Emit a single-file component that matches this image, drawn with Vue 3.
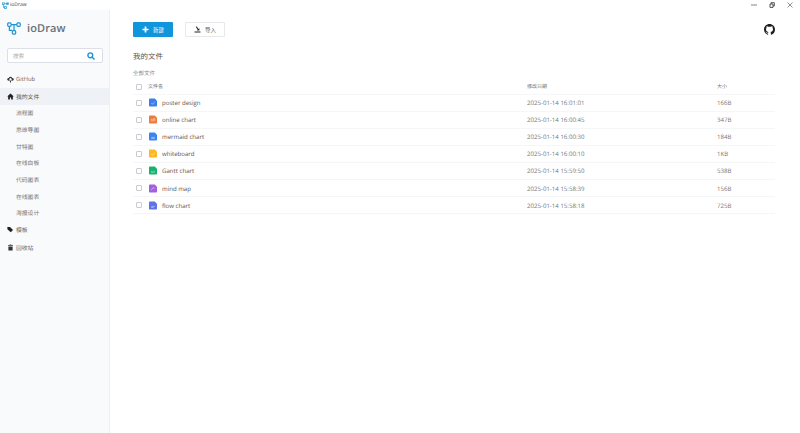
<script setup>
const nav1 = ['流程图', '思维导图', '甘特图', '在线白板', '代码图表', '在线图表', '海报设计']
const files = [
  { name: 'poster design', date: '2025-01-14 16:01:01', size: '166B', color: '#3b7ded', mark: 'M-2 0.5l1.5 1.5 2.5-3' },
  { name: 'online chart', date: '2025-01-14 16:00:45', size: '347B', color: '#ee7a3c', mark: 'M-2 2v-2h1.3v2M0.7 2v-3h1.3v3' },
  { name: 'mermaid chart', date: '2025-01-14 16:00:30', size: '184B', color: '#3a86f0', mark: 'M-2 1h4M-2 2.2h4' },
  { name: 'whiteboard', date: '2025-01-14 16:00:10', size: '1KB', color: '#fbb81f', mark: 'M-2 1l1.5 1 2.5-3' },
  { name: 'Gantt chart', date: '2025-01-14 15:59:50', size: '538B', color: '#17b26e', mark: 'M-2 1h1.6M0.4 1h1.6M-2 2.2h1.6M0.4 2.2h1.6' },
  { name: 'mind map', date: '2025-01-14 15:58:39', size: '156B', color: '#a35fe0', mark: 'M-2 2l2-3 2 1' },
  { name: 'flow chart', date: '2025-01-14 15:58:18', size: '725B', color: '#5f72e6', mark: 'M-2 1h4M-2 2.2h2.6' }
]
</script>

<template>
  <div class="window">
    <header class="titlebar">
      <div class="tb-left">
        <svg class="tb-logo" viewBox="0 0 24 24" width="7" height="7" fill="none" stroke="#1a9ad6" stroke-width="2.500"><rect x="2" y="3" width="6" height="6"/><rect x="16" y="3" width="6" height="6"/><rect x="9" y="16" width="6" height="6"/><path d="M8 6h8M5 9v10h4"/></svg>
        <span>ioDraw</span>
      </div>
      <div class="tb-controls">
        <svg width="6" height="6" viewBox="0 0 6 6"><path d="M0 3h6" stroke="#666" stroke-width="0.8"/></svg>
        <svg width="6" height="6" viewBox="0 0 6 6"><path d="M1 2h3v3.400H1zM2 2V.7h3.300V4H4" stroke="#444" stroke-width="0.9" fill="none"/></svg>
        <svg width="6" height="6" viewBox="0 0 6 6"><path d="M.5.5l5 5M5.500.5l-5 5" stroke="#666" stroke-width="0.7"/></svg>
      </div>
    </header>
    <div class="body">
      <aside class="sidebar">
        <div class="brand">
          <svg width="14" height="13" viewBox="0 0 14 13" fill="none" stroke="#1b95d2" stroke-width="1.200">
            <rect x="0.700" y="0.900" width="3.400" height="3.400" rx="1"/>
            <rect x="9.900" y="0.900" width="3.400" height="3.400" rx="1"/>
            <rect x="5.300" y="8.700" width="3.400" height="3.400" rx="1"/>
            <path d="M4.100 2.600h5.800M2.400 4.300v4h2.900M7 2.600v6.100"/>
          </svg>
          <span>ioDraw</span>
        </div>
        <div class="search">
          <span class="search-ph">搜索</span>
          <svg width="8" height="8" viewBox="0 0 8 8" fill="none" stroke="#1b95d2" stroke-width="1.400"><circle cx="3.300" cy="3.300" r="2.400"/><path d="M5 5l2.500 2.500"/></svg>
        </div>
        <nav class="nav">
          <div class="nav-item">
            <svg class="ico" viewBox="0 0 8 8"><path d="M4 .8a2 2 0 0 1 1.900 1.500A1.700 1.700 0 0 1 7.800 4a1.600 1.600 0 0 1-1.600 1.300H5V4H6L4 2 2 4h1v1.300H1.800A1.600 1.600 0 0 1 .2 4a1.700 1.700 0 0 1 1.900-1.700A2 2 0 0 1 4 .8zM3.400 5h1.200v2.400H3.400z" fill="#333"/></svg>
            <span>GitHub</span>
          </div>
          <div class="nav-item active">
            <svg class="ico" viewBox="0 0 8 8"><path d="M4 .6L.2 4h1.100v3.400h2V5.200h1.400v2.200h2V4h1.100z" fill="#222"/></svg>
            <span>我的文件</span>
          </div>
          <div v-for="n in nav1" :key="n" class="nav-sub">{{ n }}</div>
          <div class="nav-item">
            <svg class="ico" viewBox="0 0 8 8"><path d="M.4 1h3l3.500 3.500-2.600 2.600L.4 3.800z" fill="#222"/></svg>
            <span>模板</span>
          </div>
          <div class="nav-item trash">
            <svg class="ico" viewBox="0 0 8 8"><path d="M1.200 1.500h5.600v.9H1.200zM3 .5h2v.7H3zM1.600 2.800h4.800v4.700H1.600z" fill="#333"/></svg>
            <span>回收站</span>
          </div>
        </nav>
      </aside>
      <main class="main">
        <div class="toolbar">
          <button class="btn primary"><svg width="7" height="7" viewBox="0 0 7 7"><path d="M3.500.5v6M.5 3.500h6" stroke="#fff" stroke-width="1.700"/></svg><span>新建</span></button>
          <button class="btn plain"><svg width="7" height="7" viewBox="0 0 7 7"><path d="M.5 5.400h6v1.200h-6zM1.800.8l1.100-.2 1.500 2.300 1-.7v2.400H2.800l.8-.8z" fill="#222"/></svg><span>导入</span></button>
          <svg class="gh" width="11" height="11" viewBox="0 0 16 16"><path fill="#1b1f23" d="M8 0C3.580 0 0 3.580 0 8c0 3.540 2.290 6.530 5.470 7.590.4.070.55-.17.55-.38 0-.19-.01-.82-.01-1.490-2.010.37-2.530-.49-2.690-.94-.09-.23-.48-.94-.82-1.130-.28-.15-.68-.52-.01-.53.63-.01 1.080.58 1.230.82.720 1.210 1.870.87 2.330.66.070-.52.280-.87.510-1.070-1.780-.2-3.640-.89-3.640-3.950 0-.87.310-1.590.820-2.150-.08-.2-.36-1.020.08-2.120 0 0 .67-.21 2.200.820.640-.18 1.320-.27 2-.27s1.360.09 2 .27c1.530-1.040 2.200-.82 2.200-.82.440 1.100.16 1.920.08 2.120.510.560.820 1.270.820 2.150 0 3.070-1.870 3.750-3.650 3.950.290.250.540.730.540 1.480 0 1.070-.01 1.930-.01 2.200 0 .21.150.46.550.38A8.010 8.010 0 0 0 16 8c0-4.420-3.580-8-8-8z"/></svg>
        </div>
        <h1 class="title">我的文件</h1>
        <div class="crumb">全部文件</div>
        <div class="table">
          <div class="row head">
            <span class="cb"></span>
            <span>文件名</span>
            <span>修改日期</span>
            <span>大小</span>
          </div>
          <div v-for="f in files" :key="f.name" class="row file">
            <span class="cb"></span>
            <span class="name">
              <svg width="8" height="9" viewBox="-4.500 -5 9 10"><path d="M-3.500-4.500H2L4.500-2V3.500a1 1 0 0 1-1 1h-7a1 1 0 0 1-1-1v-7a1 1 0 0 1 1-1z" :fill="f.color"/><path :d="f.mark" stroke="#fff" stroke-width="0.6" fill="none" opacity="0.8"/></svg>
              <span>{{ f.name }}</span>
            </span>
            <span class="date">{{ f.date }}</span>
            <span class="size">{{ f.size }}</span>
          </div>
        </div>
      </main>
    </div>
  </div>
</template>

<style>
html, body { margin: 0; background: #fff; }
</style>

<style scoped>
.window { width: 800px; height: 433px; display: flex; flex-direction: column; overflow: hidden; font-family: "Open Sans", "Noto Sans CJK SC", sans-serif; color: #555; background: #fff; text-rendering: geometricPrecision; }
.titlebar { height: 10px; flex: none; display: flex; justify-content: space-between; align-items: center; padding: 0 7px 0 2px; }
.tb-left { display: flex; align-items: center; gap: 1px; font-size: 5px; color: #444; }
.tb-controls { display: flex; gap: 12px; align-items: center; margin-top: 0; }
.body { flex: 1; display: flex; min-height: 0; }
.sidebar { width: 109px; flex: none; background: #f8fafc; border-right: 1px solid #edf0f4; }
.brand { display: flex; align-items: center; gap: 6px; padding: 9px 0 0 7px; height: 18px; font-size: 11px; font-weight: 600; color: #68717b; letter-spacing: .1px; }
.search { margin: 11px 6px 0 7px; height: 13px; border: 1px solid #dcdfe6; border-radius: 2px; background: #fff; display: flex; align-items: center; justify-content: space-between; padding: 0 7px 0 5px; }
.search-ph { font-size: 5.500px; color: #aaa; }
.nav { margin-top: 7.500px; display: flex; flex-direction: column; }
.nav-item { height: 17px; display: flex; align-items: center; gap: 2px; padding-left: 7px; font-size: 5.800px; color: #666; }
.nav-item.active { background: #eef1f5; color: #555; }
.nav-item.trash { margin-top: 1px; }
.ico { width: 7px; height: 7px; flex: none; }
.nav-sub { height: 16.700px; display: flex; align-items: center; padding-left: 16px; font-size: 5.800px; color: #777; }
.main { flex: 1; padding: 12px 25px 0 23px; min-width: 0; }
.toolbar { display: flex; align-items: center; gap: 12px; height: 15px; }
.btn { width: 40px; height: 15px; box-sizing: border-box; padding: 0; display: flex; align-items: center; justify-content: center; gap: 4px; border-radius: 1px; font-family: inherit; font-size: 5.500px; }
.btn.primary { background: #1296db; border: none; color: #fff; }
.btn.plain { background: #fff; border: 1px solid #e6e8ec; color: #555; }
.gh { margin-left: auto; }
.title { margin: 14px 0 0; font-size: 7.500px; font-weight: 400; line-height: 12px; color: #555; }
.crumb { margin-top: 6px; font-size: 5.500px; line-height: 8px; color: #888; }
.table { margin-top: 1.500px; }
.row { display: grid; grid-template-columns: 12px 379px 190px 1fr; align-items: center; height: 17.100px; box-sizing: border-box; border-bottom: 1px solid #f5f6f8; padding-left: 3px; }
.row.head { height: 16px; font-size: 5px; color: #777; }
.row.head .cb { margin-top: 1px; }
.cb { width: 6px; height: 6px; box-sizing: border-box; border: 1px solid #c8ccd2; border-radius: 1px; background: #fff; }
.name { display: flex; align-items: center; gap: 5px; padding-left: 1px; font-size: 6.100px; color: #555; }
.date, .size { font-size: 6.100px; color: #777; }
</style>
